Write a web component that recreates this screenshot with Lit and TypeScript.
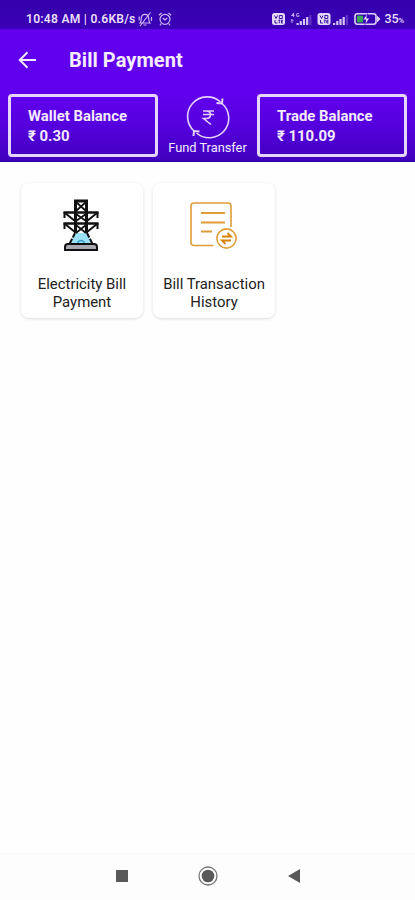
import { LitElement, html, css, svg } from "lit";
import { customElement, property } from "lit/decorators.js";

@customElement("status-bar")
class StatusBar extends LitElement {
  static styles = css`
    :host { display: flex; align-items: center; justify-content: space-between; height: 29px; box-sizing: border-box;
      padding: 9px 11px 0 26px; background: linear-gradient(#3500ac, #3a00b6); color: #e9defa;
      font: 500 12px/20px Roboto, sans-serif; }
    .group { display: flex; align-items: center; height: 20px; white-space: nowrap; }
    .clock { width: 111px; letter-spacing: 0.25px; font-size: 12.1px; font-weight: 600; }
    svg { display: block; flex: none; }
    .pct { font-size: 12.5px; margin-left: 2px; letter-spacing: -0.2px; line-height: 21px; }
    .small { font-size: 8px; }
  `;
  signal(bars: number) {
    return [0, 1, 2, 3, 4].map((i) => svg`<rect x=${i * 3.2} y=${9 - i * 2} width="2.2" height=${2 + i * 2}
      fill="#ddcffa" opacity=${i < bars ? 0.95 : 0.25} />`);
  }
  volte() {
    return svg`<rect x="0" y="0" width="13" height="12" rx="2.5" fill="#e3d8f8" />
      <path d="M2.500 2.500l1.500 3 1.500-3M7.300 2.500h3v3h-3zM3 7v3h2.500M6.300 7.200h2M7.300 7.200v3M11 7.200H9.400v2.800H11M9.400 8.600h1.400"
        fill="none" stroke="#3c13a5" stroke-width="1" />`;
  }
  render() {
    return html`
      <div class="group">
        <span class="clock">10:48 AM | 0.6KB/s</span>
        <svg width="36" height="16" viewBox="0 0 36 16" fill="none" stroke="#cbb8f3" stroke-width="1.2">
          <path d="M3 12c1-1.200 1.300-2.300 1.300-4.500C4.300 4.800 5.800 3.400 8 3.400s3.700 1.400 3.700 4.100c0 2.200.3 3.300 1.300 4.500zM6.500 14h3M3 15L13.500 1.500M2.200 5.500v4M14.500 6v4" />
          <circle cx="28" cy="8.300" r="5" />
          <path d="M25.800 7l2.200 2 2.200-2M21.800 4.300l2.800-2.300M34.200 4.300L31.400 2M24.300 12.500l-1.300 1.800M31.700 12.500l1.300 1.800" />
        </svg>
      </div>
      <div class="group">
        <svg width="110" height="14" viewBox="0 0 110 14">
          <g transform="translate(0 1)">${this.volte()}</g>
          <path d="M21.500 1.200l-2 2.300h3M21.600 1v4M27 1.700h-2.300v2.600H27V3.100M20 11V7.500m-1.300 1.300L20 7.500l1.300 1.300" fill="none" stroke="#cbb8f3" stroke-width=".9" />
          <g transform="translate(24.500 2)">${this.signal(4)}</g>
          <g transform="translate(45.500 1)">${this.volte()}</g>
          <g transform="translate(61 2)">${this.signal(4)}</g>
          <rect x="83" y="1.800" width="21" height="10.500" rx="2.500" fill="none" stroke="#ddcffa" stroke-width="1.600" />
          <path d="M105 3.500l3.500 3.500-3.500 3.500z" fill="#ddcffa" />
          <rect x="85" y="3.700" width="6" height="6.700" fill="#36a852" />
          <path d="M95.500 1.500L91 7.700h3l-1 5 4.500-6.500h-3z" fill="#f2eaff" stroke="#3900b4" stroke-width=".5" />
        </svg>
        <span class="pct">35<span class="small">%</span></span>
      </div>`;
  }
}

@customElement("balance-box")
class BalanceBox extends LitElement {
  @property() label = "";
  @property() amount = "";
  static styles = css`
    :host { display: block; box-sizing: border-box; width: 150px; height: 63px; padding: 9px 0 0 17px;
      border: 3px solid #e6d5fc; border-radius: 4px; color: #f3eaff; white-space: nowrap;
      font: 700 14.9px/20px Roboto, sans-serif; }
    .amount { font-size: 14.9px; }
  `;
  render() {
    return html`<div>${this.label}</div><div class="amount">${this.amount}</div>`;
  }
}

@customElement("service-card")
class ServiceCard extends LitElement {
  @property() first = "";
  @property() second = "";
  static styles = css`
    :host { display: flex; flex-direction: column; align-items: center; box-sizing: border-box; width: 122px; height: 135px;
      padding-top: 14px; border-radius: 8px; background: #fff; color: #222;
      box-shadow: 0 1px 3px rgba(0, 0, 0, 0.14); font: 400 14.9px/17.5px Roboto, sans-serif; }
    .icon { height: 79px; margin-right: 2px; }
    .label { text-align: center; white-space: nowrap; }
  `;
  render() {
    return html`<div class="icon"><slot></slot></div>
      <div class="label">${this.first}<br />${this.second}</div>`;
  }
}

@customElement("app-root")
class AppRoot extends LitElement {
  static styles = css`
    :host { display: flex; flex-direction: column; height: 900px; width: 415px; overflow: hidden; background: #fefefe;
      font-family: Roboto, sans-serif; }
    svg { display: block; }
    .header { height: 133px; box-sizing: border-box; border-bottom: 1px solid #2700a0;
      background: linear-gradient(#6200ee 0, #6000ec 52%, #5400dc 75%, #4100bd 100%); color: #f5edff; }
    .bar { display: flex; align-items: center; height: 62px; padding-left: 18px; gap: 32px; }
    .title { font-size: 20px; font-weight: 700; line-height: 24px; letter-spacing: 0.05px; }
    .balances { display: flex; justify-content: space-between; padding: 3px 8px 0 8px; }
    .transfer { display: flex; flex-direction: column; align-items: center; flex: 1; padding-top: 1px; white-space: nowrap;
      font-size: 12.8px; line-height: 15px; }
    .cards { display: flex; gap: 10px; padding: 21px; flex: 1; align-items: flex-start; }
    .nav { display: grid; grid-template-columns: 86px 86px 86px; justify-content: center; align-items: center;
      justify-items: center; height: 47px; box-sizing: border-box; padding-bottom: 3px; border-top: 1px solid #fafafa;
      background: #fdfdfd; }
  `;
  render() {
    return html`
      <status-bar></status-bar>
      <div class="header">
        <div class="bar">
          <svg width="19" height="18" viewBox="0 0 19 18" fill="none" stroke="#f2e8ff" stroke-width="2">
            <path d="M18 9H2M9.500 1.300L1.800 9l7.700 7.700" />
          </svg>
          <div class="title">Bill Payment</div>
        </div>
        <div class="balances">
          <balance-box label="Wallet Balance" amount="₹ 0.30"></balance-box>
          <div class="transfer">
            <svg width="44" height="45" viewBox="0 0 44 45" fill="none" stroke="#e3d2fc" stroke-width="1.600">
              <path d="M8 36A19.300 19.300 0 0 1 34.500 7M36 8.500A19.300 19.300 0 0 1 10.500 38" />
              <path d="M36.500 3.500l-.5 5-5.500-.5M7.500 41l.5-5 5.500.5" stroke-width="2" />
              <path d="M17 16h11M17 19.500h11M17 16h3c6 0 6 7.500 0 7.500h-2.500l7.500 6" />
            </svg>
            <span>Fund Transfer</span>
          </div>
          <balance-box label="Trade Balance" amount="₹ 110.09"></balance-box>
        </div>
      </div>
      <div class="cards">
        <service-card first="Electricity Bill" second="Payment">
          <svg width="38" height="56" viewBox="0 0 38 56" fill="none" stroke="#111" stroke-width="2">
            <path d="M13 36h12l6 12H7z" fill="#9be1f5" stroke="none" />
            <path d="M13 36L7 48M25 36L31 48" stroke-dasharray="5 1.500" />
            <path d="M13.500 36V4h11v32" stroke-width="3" />
            <path d="M14 5l10 9M24 5l-10 9M14 17l10 7M24 17l-10 7M14 28l10 8M24 28l-10 8" stroke-width="1.800" />
            <path d="M1.500 15.500h35M1.500 26.500h35" stroke-width="2.400" />
            <path d="M3 16l10 8M35 16l-10 8M3 27l10 8M35 27l-10 8" stroke-width="2" />
            <path d="M2.500 15v6M35.500 15v6M2.500 26v6M35.500 26v6" stroke-width="2" />
            <path d="M16 47v-2q3-3 6 0v2" stroke="#329ac4" stroke-width="1.500" />
            <path d="M3 53v-3q0-3 3-3h26q3 0 3 3v3z" fill="#aaa9b1" />
          </svg>
        </service-card>
        <service-card first="Bill Transaction" second="History">
          <svg width="48" height="56" viewBox="0 0 48 56" fill="none" stroke="#df9c37" stroke-width="1.600">
            <path d="M25.500 48.500H6q-3 0-3-3V9q0-3 3-3h34q3 0 3 3v21" transform="translate(-1 0)" />
            <path d="M12 16h24M12 25.500h24M12 34.500h11" stroke-width="2" />
            <circle cx="37.500" cy="41.500" r="9.600" />
            <path d="M33 39.500h9l-3.500-3.500M42 43.500h-9l3.500 3.500" stroke="#d88100" stroke-width="1.800" />
          </svg>
        </service-card>
      </div>
      <div class="nav">
        <svg width="12" height="12"><rect width="12" height="12" fill="#595959" /></svg>
        <svg width="20" height="20"><circle cx="10" cy="10" r="9" fill="none" stroke="#777" stroke-width="1.300" /><circle cx="10" cy="10" r="6.300" fill="#595959" /></svg>
        <svg width="12" height="14"><path d="M0 7L12 0v14z" fill="#595959" /></svg>
      </div>`;
  }
}
